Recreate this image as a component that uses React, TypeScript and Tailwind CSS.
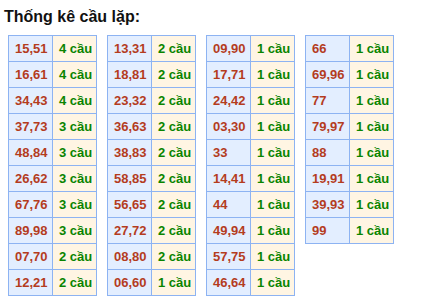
type Row = [string, number];

const tables: Row[][] = [
  [
    ["15,51", 4], ["16,61", 4], ["34,43", 4], ["37,73", 3], ["48,84", 3],
    ["26,62", 3], ["67,76", 3], ["89,98", 3], ["07,70", 2], ["12,21", 2],
  ],
  [
    ["13,31", 2], ["18,81", 2], ["23,32", 2], ["36,63", 2], ["38,83", 2],
    ["58,85", 2], ["56,65", 2], ["27,72", 2], ["08,80", 2], ["06,60", 1],
  ],
  [
    ["09,90", 1], ["17,71", 1], ["24,42", 1], ["03,30", 1], ["33", 1],
    ["14,41", 1], ["44", 1], ["49,94", 1], ["57,75", 1], ["46,64", 1],
  ],
  [
    ["66", 1], ["69,96", 1], ["77", 1], ["79,97", 1], ["88", 1],
    ["19,91", 1], ["39,93", 1], ["99", 1],
  ],
];

function CauTable({ rows }: { rows: Row[] }) {
  return (
    <div className="w-[89px] border-l border-t border-[#8db3f2]">
      {rows.map(([pair, count]) => (
        <div key={pair} className="flex h-[26px]">
          <div className="flex w-[44px] items-center border-r border-b border-[#8db3f2] bg-[#e3eeff] pl-[6px] font-bold text-[#b43c1e]">
            {pair}
          </div>
          <div className="flex w-[44px] items-center border-r border-b border-[#8db3f2] bg-[#fff5e3] pl-[6px] font-bold text-[#0a8400]">
            {count} cầu
          </div>
        </div>
      ))}
    </div>
  );
}

export default function App() {
  return (
    <div className="h-[303px] w-[423px] bg-white font-['Liberation_Sans',Arial,sans-serif]">
      <div className="pl-[4px] pt-[8px] text-[16px] leading-[18px] font-bold text-[#111]">
        Thống kê cầu lặp:
      </div>

      {/* bảng cầu */}
      <div className="mt-[9px] flex items-start gap-[10px] pl-[8px] text-[13px]">
        {tables.map((rows, i) => (
          <CauTable key={i} rows={rows} />
        ))}
      </div>
    </div>
  );
}
